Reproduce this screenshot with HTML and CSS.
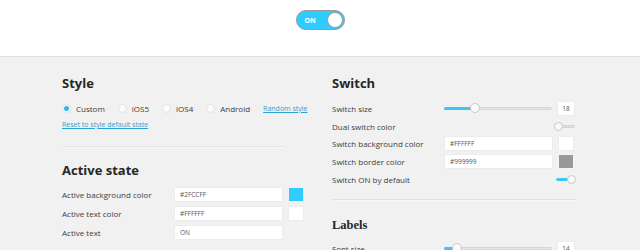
FILE: index.html
```html
<!DOCTYPE html>
<html>
<head>
<meta charset="utf-8">
<link rel="stylesheet" href="styles.css">
</head>
<body>
<header class="top">
  <div class="toggle">
    <span class="toggle-text">ON</span>
    <span class="toggle-knob"></span>
  </div>
</header>
<main class="panel">
  <section class="col">
    <h2 class="title">Style</h2>
    <div class="radios">
      <label class="radio checked"><span class="dot"></span>Custom</label>
      <label class="radio"><span class="dot"></span>iOS5</label>
      <label class="radio"><span class="dot"></span>iOS4</label>
      <label class="radio"><span class="dot"></span>Android</label>
      <a class="link">Random style</a>
    </div>
    <a class="link reset">Reset to style default state</a>
    <hr class="divider">
    <h2 class="title">Active state</h2>
    <div class="rows loose">
      <div class="row"><span class="lbl">Active background color</span><span class="field">#2FCCFF</span><span class="swatch blue"></span></div>
      <div class="row"><span class="lbl">Active text color</span><span class="field">#FFFFFF</span><span class="swatch"></span></div>
      <div class="row"><span class="lbl">Active text</span><span class="field">ON</span></div>
    </div>
  </section>
  <section class="col">
    <h2 class="title">Switch</h2>
    <div class="rows">
      <div class="row"><span class="lbl">Switch size</span><span class="slider"><span class="fill" style="width:31px"></span><span class="thumb" style="left:30px"></span></span><span class="num">18</span></div>
      <div class="row"><span class="lbl">Dual switch color</span><span class="mini off"><span class="mini-knob"></span></span></div>
      <div class="row"><span class="lbl">Switch background color</span><span class="field">#FFFFFF</span><span class="swatch"></span></div>
      <div class="row"><span class="lbl">Switch border color</span><span class="field">#999999</span><span class="swatch gray"></span></div>
      <div class="row"><span class="lbl">Switch ON by default</span><span class="mini on"><span class="mini-knob"></span></span></div>
    </div>
    <hr class="divider">
    <h2 class="title serif">Labels</h2>
    <div class="rows">
      <div class="row"><span class="lbl">Font size</span><span class="slider"><span class="fill" style="width:13px"></span><span class="thumb" style="left:12px"></span></span><span class="num">14</span></div>
    </div>
  </section>
</main>
</body>
</html>
```
FILE: styles.css
```css
html, body {
  margin: 0;
  padding: 0;
  height: 100%;
  overflow: hidden;
}
body {
  font-family: "Open Sans", sans-serif;
  font-size: 8px;
  color: #404040;
  background: #f1f1f1;
}
.top {
  height: 57px;
  box-sizing: border-box;
  background: #fff;
  border-bottom: 1px solid #e3e3e3;
  display: flex;
  justify-content: center;
  align-items: flex-start;
  padding-top: 10px;
}
.toggle {
  width: 49px;
  height: 20px;
  box-sizing: border-box;
  border: 1px solid #9a9a9a;
  border-radius: 10px;
  background: #2fccff;
  display: flex;
  align-items: center;
  justify-content: space-between;
  padding: 0 1px 0 8px;
}
.toggle-text {
  color: #fff;
  font-weight: 700;
  font-size: 7px;
}
.toggle-knob {
  width: 16px;
  height: 16px;
  border-radius: 50%;
  background: #fff;
  border: 1px solid #9a9a9a;
  box-sizing: border-box;
}
.panel {
  display: flex;
  gap: 26px;
  padding-left: 62px;
}
.col {
  width: 244px;
  display: flex;
  flex-direction: column;
  padding-top: 18px;
}
.title {
  margin: 0;
  font-size: 13px;
  line-height: 16px;
  font-weight: 700;
  color: #262626;
}
.title.serif {
  font-family: "Liberation Serif", serif;
  font-size: 12.5px;
  margin-top: 2px;
  margin-bottom: -2px;
}
.radios {
  display: flex;
  align-items: center;
  height: 10px;
  margin-top: 12px;
  gap: 13px;
  white-space: nowrap;
}
.radio {
  display: flex;
  align-items: center;
  gap: 5px;
  color: #3a3a3a;
  flex: none;
}
.dot {
  width: 9px;
  height: 9px;
  border-radius: 50%;
  background: #fbfbfb;
  border: 1px solid #e2e2e2;
  box-sizing: border-box;
  display: flex;
  align-items: center;
  justify-content: center;
}
.radio.checked .dot::after {
  content: "";
  width: 5px;
  height: 5px;
  border-radius: 50%;
  background: #2fb8ee;
}
.link {
  color: #2aa3d6;
  text-decoration: underline;
  font-size: 7px;
  white-space: nowrap;
  flex: none;
}
.reset {
  margin-top: 7px;
  line-height: 10px;
  align-self: flex-start;
}
.divider {
  border: 0;
  border-top: 1px solid #e2e2e2;
  border-bottom: 1px solid #f8f8f8;
  margin: 16px 22px 14px 0;
}
.col:nth-child(2) .divider {
  margin-top: 12px;
  margin-right: 0;
}
.rows {
  display: flex;
  flex-direction: column;
  gap: 2.7px;
  margin-top: 10px;
}
.rows.loose {
  gap: 4px;
  margin-top: 9px;
}
.row {
  display: flex;
  align-items: center;
  height: 15px;
}
.lbl {
  width: 112px;
  flex: none;
  white-space: nowrap;
}
.field {
  width: 109px;
  height: 15px;
  box-sizing: border-box;
  background: #fff;
  border: 1px solid #ececec;
  font-size: 6.5px;
  color: #555;
  padding-left: 5px;
  display: flex;
  align-items: center;
}
.swatch {
  width: 16px;
  height: 15px;
  margin-left: 5px;
  box-sizing: border-box;
  background: #fff;
  border: 1px solid #ececec;
}
.swatch.blue { background: #2fccff; border-color: #f4f4f4; }
.swatch.gray { background: #999; border-color: #f4f4f4; }
.slider {
  position: relative;
  width: 108px;
  height: 3px;
  background: #e6e6e6;
  border: 1px solid #d6d6d6;
  border-radius: 2px;
  box-sizing: border-box;
}
.fill {
  position: absolute;
  left: -1px;
  top: -1px;
  height: 3px;
  background: #3ec6f2;
  border-radius: 2px;
}
.thumb {
  position: absolute;
  top: -5px;
  width: 10px;
  height: 10px;
  margin-left: -5px;
  border-radius: 50%;
  background: #fafafa;
  border: 1px solid #c8c8c8;
  box-sizing: border-box;
}
.num {
  margin-left: 5px;
  width: 18px;
  height: 15px;
  box-sizing: border-box;
  background: #fff;
  border: 1px solid #ececec;
  font-size: 6.5px;
  color: #555;
  display: flex;
  align-items: center;
  justify-content: center;
}
.mini {
  margin-left: auto;
  width: 22px;
  height: 9px;
  position: relative;
  display: flex;
  align-items: center;
}
.mini::before {
  content: "";
  position: absolute;
  left: 2px;
  right: 1px;
  height: 3px;
  border-radius: 2px;
  background: #e4e4e4;
  border: 1px solid #d2d2d2;
  box-sizing: border-box;
}
.mini.on::before {
  background: #3ec6f2;
  border-color: #3ec6f2;
  right: 6px;
}
.mini-knob {
  position: relative;
  width: 9px;
  height: 9px;
  border-radius: 50%;
  background: #fafafa;
  border: 1px solid #c8c8c8;
  box-sizing: border-box;
}
.mini.on .mini-knob {
  margin-left: auto;
}
```
